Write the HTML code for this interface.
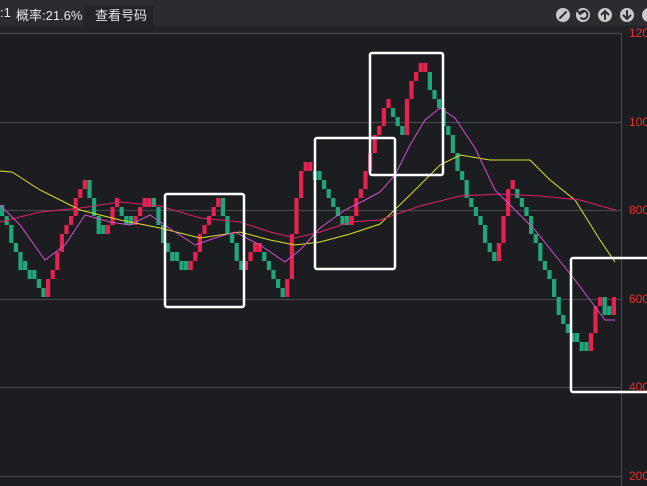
<!DOCTYPE html>
<html><head><meta charset="utf-8"><style>
body{margin:0;width:647px;height:486px;overflow:hidden;background:#1c1d21;font-family:"Liberation Sans","Noto Sans CJK SC",sans-serif}
#hdr{position:absolute;left:0;top:0;width:647px;height:26px;background:#2b2c30}
#hdr2{position:absolute;left:0;top:26px;width:647px;height:7px;background:#222327}
.t{position:absolute;top:5px;color:#e6e6e6;font-size:13px}
#btn{position:absolute;left:84px;top:6px;width:69px;height:20px;background:#232428}
.lab{position:absolute;left:629px;color:#e8302c;font-size:12px}
</style></head><body>
<div id="hdr"></div><div id="hdr2"></div>
<div id="btn"></div>
<div class="t" style="left:0px">:1</div>
<div class="t" style="left:16px">概率:21.6%</div>
<div class="t" style="left:95px">查看号码</div>
<svg width="647" height="30" style="position:absolute;left:0;top:0">
<g fill="#c9c9c9"><circle cx="563" cy="15" r="7"/><circle cx="583" cy="15" r="7"/><circle cx="605" cy="15" r="7"/><circle cx="627" cy="15" r="7"/><circle cx="649" cy="15" r="7"/></g>
<g stroke="#2b2c30" stroke-width="2" fill="none" stroke-linecap="round">
<line x1="560" y1="18" x2="566" y2="12"/>
<path d="M580 13 A4 4 0 1 1 581 18"/><path d="M578 11 L580 14 L583 12"/>
<path d="M605 19 V11 M601.5 14.5 L605 11 L608.5 14.5"/>
<path d="M627 11 V19 M623.5 15.5 L627 19 L630.5 15.5"/>
</g></svg>
<svg width="647" height="486" style="position:absolute;left:0;top:0" id="s">
<g stroke="#4a4b50" stroke-width="1">
<line x1="0" y1="33.5" x2="622" y2="33.5"/><line x1="0" y1="122.5" x2="622" y2="122.5"/><line x1="0" y1="210.5" x2="622" y2="210.5"/><line x1="0" y1="299.5" x2="622" y2="299.5"/><line x1="0" y1="387.5" x2="622" y2="387.5"/><line x1="0" y1="476.5" x2="622" y2="476.5"/>
<line x1="621.5" y1="33" x2="621.5" y2="486"/>
</g>
<g id="c"></g>
<polyline fill="none" stroke="#e0e020" stroke-width="1" points="0,171 12,172 40,190 80,210 120,220 160,228 200,238 240,232 270,240 295,245 320,242 350,234 380,224 410,195 440,165 460,155 490,160 530,160 550,180 575,200 600,240 615,262"/>
<polyline fill="none" stroke="#e0206a" stroke-width="1" points="0,222 40,212 80,208 120,202 160,206 200,218 240,222 270,232 295,238 320,232 350,222 380,220 420,206 460,196 500,194 540,196 580,200 615,210"/>
<polyline fill="none" stroke="#d050d0" stroke-width="1" points="0,205 20,225 45,260 65,245 85,215 110,222 130,225 150,215 175,232 195,245 215,238 235,232 260,245 285,262 300,250 320,228 345,210 365,200 380,192 395,175 410,145 425,120 440,108 455,118 475,148 495,190 515,210 535,230 555,255 575,280 590,300 605,320 615,320"/>
<g fill="none" stroke="#fff" stroke-width="2.5">
<rect x="165" y="194" width="79" height="113" rx="2"/>
<rect x="315" y="138" width="80" height="131" rx="2"/>
<rect x="370" y="53" width="73" height="122" rx="2"/>
<rect x="571" y="258" width="80" height="134" rx="2"/>
</g>
</svg>
<div class="lab" style="top:26px">1200</div><div class="lab" style="top:115px">1000</div><div class="lab" style="top:203px">800</div><div class="lab" style="top:292px">600</div><div class="lab" style="top:380px">400</div><div class="lab" style="top:469px">200</div>
<script>
var P=[[0,205],[20,265],[45,295],[60,240],[85,180],[100,242],[115,205],[130,228],[150,195],[165,250],[185,272],[200,238],[218,198],[240,272],[255,248],[285,298],[300,172],[320,178],[345,228],[362,188],[375,138],[385,105],[402,135],[410,78],[425,73],[440,112],[470,205],[495,262],[510,178],[530,228],[548,278],[565,332],[588,355],[598,295],[608,322],[615,290]];
function f(x){for(var i=0;i<P.length-1;i++){if(x<=P[i+1][0]){var a=P[i],b=P[i+1];return a[1]+(b[1]-a[1])*(x-a[0])/(b[0]-a[0]);}}return P[P.length-1][1];}
var g=document.getElementById('c'),h='',prev=f(0),dir=1;
for(var x=0;x<616;x+=4.6){var y=Math.round(f(x+2.3)/9)*9;
if(y>prev){h+='<rect x="'+x.toFixed(1)+'" y="'+prev+'" width="4.2" height="'+(y-prev)+'" fill="#1fa77a"/>';dir=1;}
else if(y<prev){h+='<rect x="'+x.toFixed(1)+'" y="'+y+'" width="4.2" height="'+(prev-y)+'" fill="#e8224f"/>';dir=-1;}
else{h+='<rect x="'+x.toFixed(1)+'" y="'+(y-9)+'" width="4.2" height="9" fill="'+(dir>0?'#1fa77a':'#e8224f')+'"/>';}
prev=y;}
g.innerHTML=h;
</script>
</body></html>
